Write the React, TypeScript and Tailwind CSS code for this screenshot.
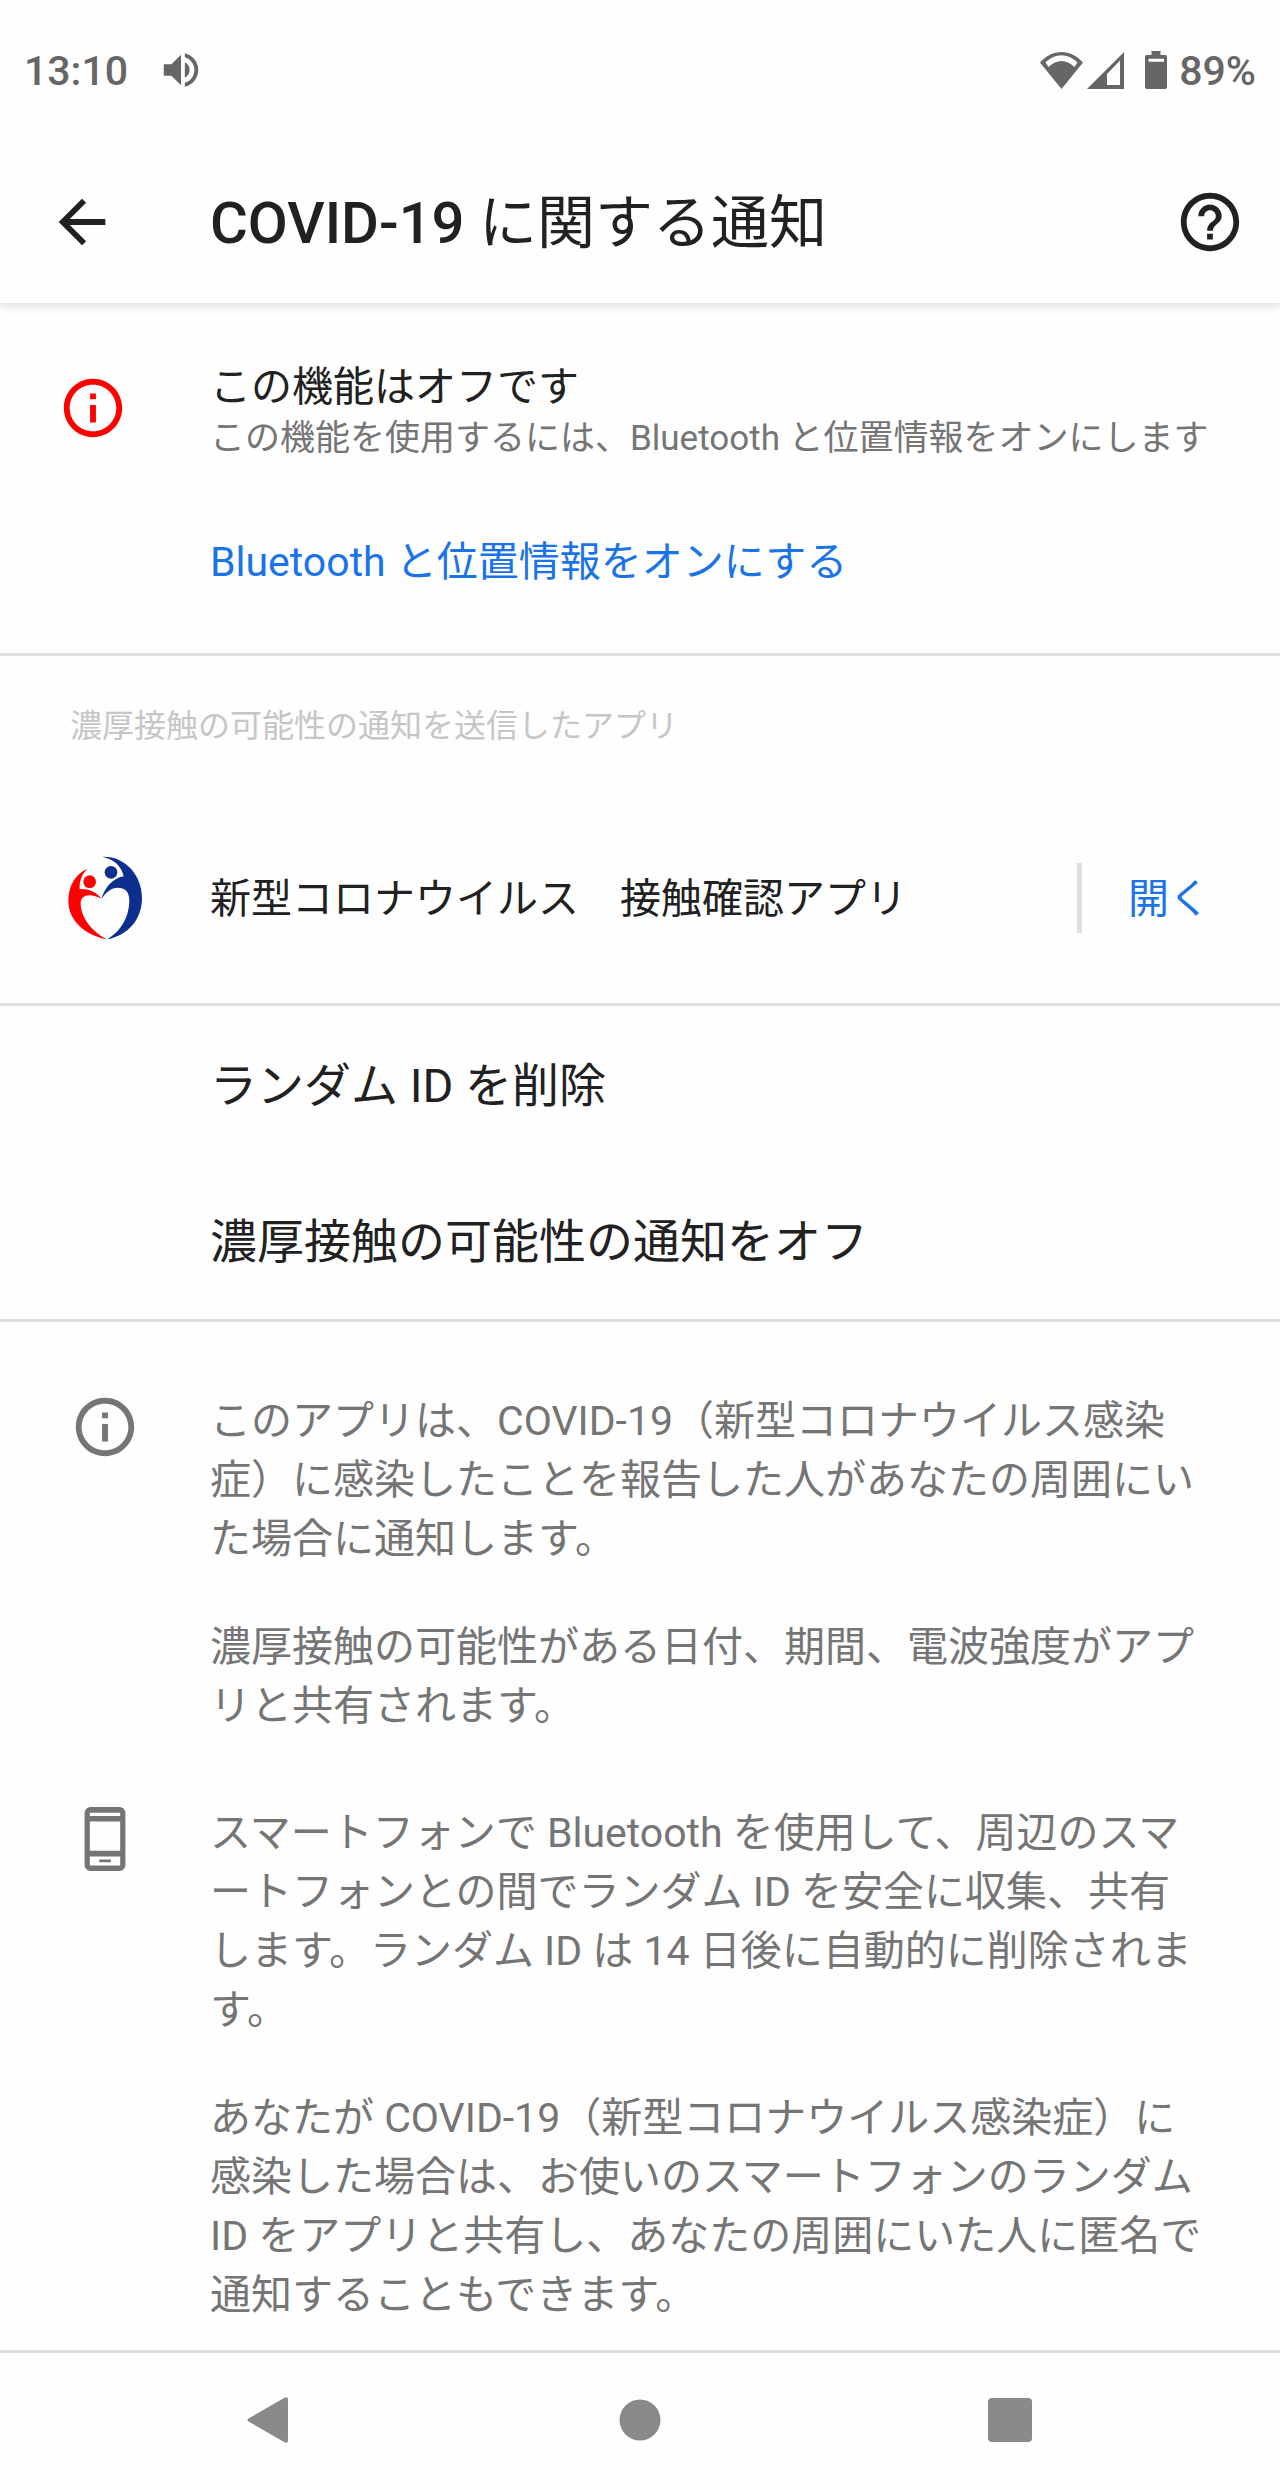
import type { ReactNode } from 'react';
import { MdArrowBack, MdHelpOutline, MdInfoOutline, MdVolumeUp } from 'react-icons/md';

const details = [
  {
    id: 'about',
    icon: <MdInfoOutline className="w-[70px] h-[70px]" />,
    paragraphs: [
      'このアプリは、COVID-19（新型コロナウイルス感染症）に感染したことを報告した人があなたの周囲にいた場合に通知します。',
      '濃厚接触の可能性がある日付、期間、電波強度がアプリと共有されます。'
    ]
  },
  {
    id: 'device',
    icon: <PhoneIcon />,
    paragraphs: [
      'スマートフォンで Bluetooth を使用して、周辺のスマートフォンとの間でランダム ID を安全に収集、共有します。ランダム ID は 14 日後に自動的に削除されます。',
      'あなたが COVID-19（新型コロナウイルス感染症）に感染した場合は、お使いのスマートフォンのランダム ID をアプリと共有し、あなたの周囲にいた人に匿名で通知することもできます。'
    ]
  }
];

const actions = ['ランダム ID を削除', '濃厚接触の可能性の通知をオフ'];

function PhoneIcon() {
  return (
    <svg viewBox="0 0 24 24" className="w-[70px] h-[70px]" fill="currentColor" aria-hidden="true">
      <path
        fillRule="evenodd"
        d="M7 1h10a2 2 0 0 1 2 2v18a2 2 0 0 1-2 2H7a2 2 0 0 1-2-2V3a2 2 0 0 1 2-2zM6.8 3v1.1h10.4V3zM6.8 6v10h10.4V6zM6.8 18v3.1h10.4V18zM10 19h4v1h-4z"
      />
    </svg>
  );
}

function WifiIcon() {
  return (
    <svg viewBox="0 0 43 37" className="w-[43px] h-[37px]" fill="currentColor" aria-hidden="true">
      <path
        fillRule="evenodd"
        d="M21.500 37 0 10.500C6 4 13.500 0 21.500 0S37 4 43 10.500zM5.500 10.200l3 4.800c4-4 8.500-6 13-6s9 2 13 6l3-4.800c-5-4.700-10.500-7-16-7s-11 2.300-16 7z"
      />
    </svg>
  );
}

function SignalIcon() {
  return (
    <svg viewBox="0 0 37 37" className="w-[37px] h-[37px]" fill="currentColor" aria-hidden="true">
      <path fillRule="evenodd" d="M0 37 37 0v37zM20 22v11h13V8.500z" />
    </svg>
  );
}

function BatteryIcon() {
  return (
    <svg viewBox="0 0 22 38" className="w-[22px] h-[38px]" fill="currentColor" aria-hidden="true">
      <path
        fillRule="evenodd"
        d="M6.500 0h9v4H20a2 2 0 0 1 2 2v30a2 2 0 0 1-2 2H2a2 2 0 0 1-2-2V6a2 2 0 0 1 2-2h4.500zM3.500 7.800v3h15.500v-3z"
      />
    </svg>
  );
}

// Two figures holding up a heart
function AppLogo() {
  return (
    <svg viewBox="45 43 240 264" className="w-[80px] h-[88px]" aria-hidden="true">
      <g fill="#ff0000">
        <circle cx="119" cy="126" r="19" />
        <path d="M112 87C74 104 55 141 55 184c0 58 49 102 115 115-45-24-77-66-78-106-1-30 30-33 63-16-17-20-37-30-66-29-1-24 6-44 23-61z" />
      </g>
      <g fill="#0b2e8f">
        <circle cx="183" cy="98" r="19" />
        <path d="M157 51c66-3 119 54 119 123 0 66-42 112-104 125 42-25 66-69 66-117 0-26-13-38-35-38-19 0-36 14-49 34 10-32 32-62 67-68-7-32-29-51-64-59z" />
      </g>
    </svg>
  );
}

function StatusBar() {
  return (
    <div className="h-[140px] px-6 flex items-center justify-between text-[41px] font-medium text-[#666666]">
      <div className="flex items-center gap-[30px]">
        <span className="pt-1">13:10</span>
        <MdVolumeUp className="w-[46px] h-[46px]" />
      </div>
      <div className="flex items-center">
        <div className="flex items-center gap-1 mr-[21px]">
          <WifiIcon />
          <SignalIcon />
        </div>
        <BatteryIcon />
        <span className="ml-3 pt-1">89%</span>
      </div>
    </div>
  );
}

function NavButton({ label, children }: { label: string; children: ReactNode }) {
  return (
    <button type="button" aria-label={label} className="flex items-center justify-center">
      <svg viewBox="0 0 46 46" className="w-[46px] h-[46px]" fill="#8a8a8a" aria-hidden="true">
        {children}
      </svg>
    </button>
  );
}

export default function App() {
  return (
    <div
      lang="ja"
      className="min-h-screen flex flex-col bg-[#fefefe] text-[#212121] font-['Roboto','Noto_Sans_CJK_JP',sans-serif]"
    >
      {/* Header */}
      <header className="relative z-10 bg-[#fefefe] shadow-[0_2px_10px_rgba(0,0,0,0.16)]">
        <StatusBar />
        <div className="h-[163px] pl-[47px] pr-[35px] flex items-center">
          <button type="button" aria-label="戻る">
            <MdArrowBack className="w-[70px] h-[70px]" />
          </button>
          <h1 className="flex-1 ml-[93px] pt-1 text-[58px]">
            <span className="font-medium">COVID-19</span> に関する通知
          </h1>
          <button type="button" aria-label="ヘルプ">
            <MdHelpOutline className="w-[70px] h-[70px]" />
          </button>
        </div>
      </header>

      <main className="flex-1">
        {/* Off state */}
        <section className="pt-[57px] pb-16 flex border-b-3 border-[#dfdfdf]">
          <div className="w-[210px] pl-[58px] pt-[13px] shrink-0 text-[#ff0000]">
            <MdInfoOutline className="w-[70px] h-[70px]" />
          </div>
          <div className="flex-1">
            <h2 className="text-[41px] leading-[54px]">この機能はオフです</h2>
            <p className="text-[35px] leading-[50px] text-[#757575]">
              この機能を使用するには、Bluetooth と位置情報をオンにします
            </p>
            <button type="button" className="block mt-[71px] text-[41px] leading-[54px] text-[#1a73e8]">
              Bluetooth と位置情報をオンにする
            </button>
          </div>
        </section>

        {/* App that sent the notification */}
        <section className="pt-[46px] pb-[70px] border-b-3 border-[#dfdfdf]">
          <h2 className="pl-[70px] text-[32px] leading-[48px] text-[#c6c6c6]">
            濃厚接触の可能性の通知を送信したアプリ
          </h2>
          <div className="mt-[113px] h-[70px] flex items-center text-[41px]">
            <div className="w-[210px] pl-[65px] shrink-0">
              <AppLogo />
            </div>
            <p className="flex-1 pt-1">新型コロナウイルス　接触確認アプリ</p>
            <button
              type="button"
              className="h-full pt-1 pl-[46px] pr-[70px] border-l-5 border-[#dfdfdf] text-[#1a73e8]"
            >
              開く
            </button>
          </div>
        </section>

        {/* Actions */}
        <section className="pt-px border-b-3 border-[#dfdfdf]">
          {actions.map((action) => (
            <button
              key={action}
              type="button"
              className="w-full h-[156px] pt-0.5 pl-[210px] block text-left text-[47px]"
            >
              {action}
            </button>
          ))}
        </section>

        {/* Details */}
        <section className="pt-[70px] pb-6 space-y-[68px] text-[#757575]">
          {details.map((detail) => (
            <div key={detail.id} className="flex">
              <div className="w-[210px] pl-[70px] shrink-0">{detail.icon}</div>
              <div className="flex-1 pr-[72px] space-y-[49px] text-[41px] leading-[59px]">
                {detail.paragraphs.map((text) => (
                  <p key={text}>{text}</p>
                ))}
              </div>
            </div>
          ))}
        </section>
      </main>

      {/* System navigation */}
      <nav className="h-[140px] px-[85px] pb-[3px] grid grid-cols-3 border-t-3 border-[#dfdfdf]">
        <NavButton label="戻る">
          <path d="M1.500 21.500 38 .500q3-1.200 3 2v41q0 3.200-3 2L1.500 24.500q-2-1.500 0-3z" />
        </NavButton>
        <NavButton label="ホーム">
          <circle cx="23" cy="23" r="20.500" />
        </NavButton>
        <NavButton label="最近のアプリ">
          <rect x="1" y="1" width="44" height="44" rx="4" />
        </NavButton>
      </nav>
    </div>
  );
}
